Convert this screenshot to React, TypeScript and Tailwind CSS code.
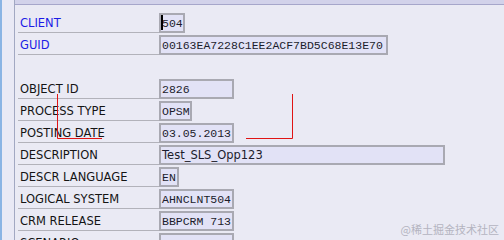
type Row = { label: string; value: string; w: string; blue?: boolean; sans?: boolean; cursor?: boolean };

const top: Row[] = [
  { label: "CLIENT", value: "504", w: "w-[26px]", blue: true, cursor: true },
  { label: "GUID", value: "00163EA7228C1EE2ACF7BD5C68E13E70", w: "w-[229px]", blue: true },
];

const rows: Row[] = [
  { label: "OBJECT ID", value: "2826", w: "w-[75px]" },
  { label: "PROCESS TYPE", value: "OPSM", w: "w-[33px]" },
  { label: "POSTING DATE", value: "03.05.2013", w: "w-[75px]" },
  { label: "DESCRIPTION", value: "Test_SLS_Opp123", w: "w-[286px]", sans: true },
  { label: "DESCR LANGUAGE", value: "EN", w: "w-[20px]" },
  { label: "LOGICAL SYSTEM", value: "AHNCLNT504", w: "w-[75px]" },
  { label: "CRM RELEASE", value: "BBPCRM 713", w: "w-[75px]" },
  { label: "SCENARIO", value: "Z1", w: "w-[75px]" },
];

function Field({ row }: { row: Row }) {
  return (
    <div className="flex h-[22px] shrink-0">
      <div
        className={`w-[141px] h-[22px] border-b border-[#b2b2ba] flex items-center pt-[5px] pl-[2px] text-[11.5px] font-['DejaVu_Sans',sans-serif] ${
          row.blue ? "text-[#1c1ce6]" : "text-[#141414]"
        }`}
      >
        {row.label}
      </div>
      <div
        className={`${row.w} relative mt-[2px] h-[20px] border-2 border-[#a9a9b2] bg-[#e2e2f6] flex items-center pl-[1px] pt-[1px] overflow-hidden whitespace-nowrap text-[#1c1c2c] ${
          row.sans ? "text-[11.5px] font-['DejaVu_Sans',sans-serif]" : "text-[11.5px] font-['Liberation_Mono',monospace]"
        }`}
      >
        {row.value}
        {row.cursor && <span className="absolute left-[0px] top-[0px] w-[2px] h-[15px] bg-black" />}
      </div>
    </div>
  );
}

export default function App() {
  return (
    <div className="w-[504px] h-[240px] relative overflow-hidden flex bg-[#eaeaf4]">
      <div className="w-[2px] bg-[#8ab4e4]" />
      <div className="w-[13px] bg-[#e9e9f5] border-r border-[#a2a8c2]" />
      <div className="flex-1 flex flex-col">
        <div className="h-[5px] shrink-0 bg-[#d2d2ea] border-b border-[#a6a6ca]" />
        <div className="pl-[3px] pt-[6px] flex flex-col">
          {top.map((r) => (
            <Field key={r.label} row={r} />
          ))}
          <div className="h-[22px] shrink-0" />
          {rows.map((r) => (
            <Field key={r.label} row={r} />
          ))}
        </div>
      </div>

      {/* red annotation marks */}
      <svg className="absolute left-0 top-0 pointer-events-none" width="504" height="240">
        <polyline points="57.5,94 57.5,138.5 102,138.5" fill="none" stroke="#e01414" strokeWidth="1" />
        <polyline points="292.5,94 292.5,138.5 246,138.5" fill="none" stroke="#e01414" strokeWidth="1" />
      </svg>

      <div className="absolute right-[5px] bottom-[3px] text-[11px] text-[#b4b4c0] font-['Noto_Sans_CJK_SC',sans-serif]">
        @稀土掘金技术社区
      </div>
    </div>
  );
}
